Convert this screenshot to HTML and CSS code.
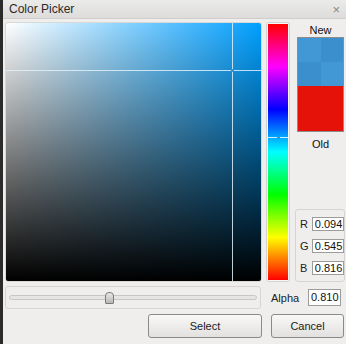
FILE: index.html
```html
<!DOCTYPE html>
<html>
<head>
<meta charset="utf-8">
<link rel="stylesheet" href="styles.css">
</head>
<body>
<div class="window">
  <div class="titlebar">
    <span class="title">Color Picker</span>
    <span class="close">×</span>
  </div>
  <div class="content">
    <div class="top">
      <div class="sv">
        <div class="sv-v"></div>
        <div class="sv-h"></div>
        <div class="sv-dot"></div>
      </div>
      <div class="hue-frame">
        <div class="hue">
          <div class="hue-mark"></div>
        </div>
      </div>
      <div class="side">
        <div class="lbl new-lbl">New</div>
        <div class="swatch">
          <div class="new">
            <div class="chk c1"></div><div class="chk c2"></div>
            <div class="chk c2"></div><div class="chk c1"></div>
          </div>
          <div class="old"></div>
        </div>
        <div class="lbl old-lbl">Old</div>
        <div class="rgb">
          <div class="row"><span>R</span><div class="field">0.094</div></div>
          <div class="row"><span>G</span><div class="field">0.545</div></div>
          <div class="row"><span>B</span><div class="field">0.816</div></div>
        </div>
      </div>
    </div>
    <div class="alpha-row">
      <div class="slider-box">
        <div class="track"></div>
        <div class="handle"></div>
      </div>
      <span class="alpha-lbl">Alpha</span>
      <div class="field">0.810</div>
    </div>
    <div class="buttons">
      <div class="btn select">Select</div>
      <div class="btn cancel">Cancel</div>
    </div>
  </div>
</div>
</body>
</html>
```
FILE: styles.css
```css
html, body {
  margin: 0;
  padding: 0;
  background: #efeeec;
}
body {
  width: 346px;
  height: 344px;
  overflow: hidden;
  font-family: "Liberation Sans", Arial, sans-serif;
  font-size: 11px;
  color: #1a1a1a;
}
.window {
  height: 344px;
  border-left: 3px solid #2b2b2b;
  background: #efeeec;
  box-sizing: border-box;
}
.titlebar {
  height: 18px;
  display: flex;
  align-items: center;
  justify-content: space-between;
  padding: 0 6px 0 6px;
  background: linear-gradient(#ebebea, #dddcda);
  border-bottom: 1px solid #cfcecc;
}
.title {
  font-size: 12px;
  color: #2a2a2a;
}
.close {
  font-size: 13px;
  color: #888;
}
.content {
  padding: 3px 1px 0 2px;
}
.top {
  display: flex;
  height: 260px;
}
.sv {
  position: relative;
  width: 255px;
  height: 258px;
  border: 1px solid #d8d8d6;
  border-radius: 3px;
  background:
    linear-gradient(to top, #000, rgba(0,0,0,0)),
    linear-gradient(to right, #fff, hsl(202.5, 100%, 50%));
}
.sv-v {
  position: absolute;
  left: 226px;
  top: 0;
  bottom: 0;
  width: 1px;
  background: rgba(225, 240, 250, 0.85);
}
.sv-h {
  position: absolute;
  top: 47px;
  left: 0;
  right: 0;
  height: 1px;
  background: rgba(225, 240, 250, 0.85);
}
.sv-dot {
  position: absolute;
  left: 225px;
  top: 46px;
  width: 3px;
  height: 3px;
  background: #3a8fd0;
}
.hue-frame {
  margin-left: 4px;
  width: 20px;
  height: 256px;
  padding: 1px;
  border: 1px solid #d4d3d1;
  border-radius: 3px;
  background: #f6f6f5;
}
.hue {
  position: relative;
  height: 256px;
  background: linear-gradient(to bottom,
    #ff0000 0%, #ff00ff 16.67%, #0000ff 33.33%, #00ffff 50%,
    #00ff00 66.67%, #ffff00 83.33%, #ff0000 100%);
}
.hue-mark {
  position: absolute;
  top: 113px;
  left: 0;
  right: 0;
  height: 1px;
  background: linear-gradient(to right, rgba(255,255,255,0.8) 0 45%, transparent 45% 60%, rgba(255,255,255,0.8) 60% 100%);
}
.side {
  margin-left: 6px;
  width: 49px;
  display: flex;
  flex-direction: column;
  align-items: center;
}
.lbl {
  font-size: 11px;
  color: #111;
}
.new-lbl {
  margin-top: 2px;
  height: 12px;
  line-height: 12px;
}
.swatch {
  margin-top: 1px;
  width: 47px;
  border: 1px solid #8c8c8c;
  box-sizing: border-box;
  height: 96px;
  display: flex;
  flex-direction: column;
}
.new {
  height: 48px;
  display: grid;
  grid-template-columns: 1fr 1fr;
  grid-template-rows: 1fr 1fr;
}
.c1 { background: #4198d4; }
.c2 { background: #3b8fcc; }
.old {
  flex: 1;
  background: #e41208;
}
.old-lbl {
  margin-top: 6px;
  height: 12px;
  line-height: 12px;
}
.rgb {
  margin-top: 59px;
  width: 50px;
  height: 73px;
  box-sizing: border-box;
  border: 1px solid #d6d5d3;
  border-radius: 3px;
  padding: 7px 0 0 4px;
  display: flex;
  flex-direction: column;
  gap: 8px;
  align-self: flex-start;
  margin-left: -1px;
}
.row {
  display: flex;
  align-items: center;
  gap: 3px;
}
.row span {
  width: 9px;
  font-size: 11px;
  color: #222;
}
.field {
  width: 33px;
  height: 14px;
  box-sizing: border-box;
  border: 1px solid #9c9c9c;
  background: #fff;
  font-size: 11px;
  line-height: 12px;
  padding-left: 2px;
  color: #111;
}
.alpha-row {
  margin-top: 4px;
  display: flex;
  align-items: center;
  height: 23px;
}
.slider-box {
  position: relative;
  width: 256px;
  height: 23px;
  box-sizing: border-box;
  border: 1px solid #d6d5d3;
  border-radius: 3px;
  display: flex;
  align-items: center;
  padding: 0 3px;
}
.track {
  flex: 1;
  height: 3px;
  border: 1px solid #c8c7c5;
  border-radius: 3px;
  background: #e6e5e3;
}
.handle {
  position: absolute;
  left: 99px;
  top: 5px;
  width: 7px;
  height: 10px;
  border: 1px solid #7a7a7a;
  border-radius: 4px 4px 1px 1px;
  background: linear-gradient(#e8e8e8, #b8b8b8);
}
.alpha-lbl {
  margin-left: 10px;
  width: 37px;
  color: #222;
}
.alpha-row .field {
  height: 17px;
  line-height: 15px;
  width: 33px;
}
.buttons {
  margin-top: 5px;
  display: flex;
  justify-content: flex-end;
  gap: 9px;
  padding-right: 1px;
}
.btn {
  height: 24px;
  box-sizing: border-box;
  border: 1px solid #8a8a8a;
  border-radius: 3px;
  background: linear-gradient(#f8f8f7, #e2e1df);
  display: flex;
  align-items: center;
  justify-content: center;
  color: #222;
  font-size: 11px;
}
.select { width: 114px; }
.cancel { width: 73px; }
```
